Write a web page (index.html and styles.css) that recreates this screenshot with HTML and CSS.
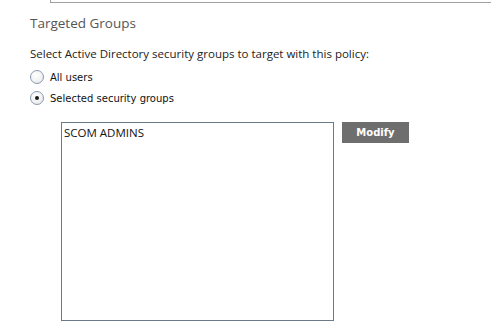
FILE: index.html
```html
<!DOCTYPE html>
<html>
<head>
<meta charset="utf-8">
<link rel="stylesheet" href="styles.css">
</head>
<body>
<div class="topbox"></div>
<div class="section">
  <h2 class="heading">Targeted Groups</h2>
  <p class="intro">Select Active Directory security groups to target with this policy:</p>
  <div class="options">
    <label class="option"><span class="radio"></span><span class="opt-text">All users</span></label>
    <label class="option"><span class="radio checked"></span><span class="opt-text">Selected security groups</span></label>
  </div>
  <div class="groups">
    <div class="listbox">
      <div class="item">SCOM ADMINS</div>
    </div>
    <button class="modify">Modify</button>
  </div>
</div>
</body>
</html>
```
FILE: styles.css
```css
html, body {
  margin: 0;
  padding: 0;
  background: #ffffff;
}
body {
  width: 491px;
  height: 334px;
  overflow: hidden;
  font-family: "Open Sans", "Noto Sans", sans-serif;
  color: #222;
}
.topbox {
  margin-left: 50px;
  height: 2px;
  border-left: 1px solid #a0a0a0;
  border-bottom: 1px solid #a0a0a0;
}
.section {
  padding-left: 30px;
}
.heading {
  margin: 0;
  padding-top: 10px;
  font-size: 13.5px;
  font-weight: 400;
  line-height: 20px;
  color: #555;
}
.intro {
  margin: 0;
  padding-top: 13px;
  font-size: 11.5px;
  line-height: 16px;
  color: #222;
}
.options {
  display: flex;
  flex-direction: column;
  gap: 5px;
  padding-top: 7px;
}
.option {
  display: flex;
  align-items: center;
  gap: 6px;
  height: 16px;
}
.radio {
  width: 12px;
  height: 12px;
  border-radius: 50%;
  border: 1px solid #8a9bb0;
  background: radial-gradient(circle at 40% 35%, #ffffff 0%, #f2f2f2 55%, #d8dde4 100%);
  position: relative;
  flex: none;
}
.radio.checked::after {
  content: "";
  position: absolute;
  left: 4px;
  top: 4px;
  width: 4px;
  height: 4px;
  border-radius: 50%;
  background: #1a1a1a;
}
.opt-text {
  font-family: "DejaVu Sans", Verdana, sans-serif;
  font-size: 10px;
  color: #111;
}
.groups {
  display: flex;
  align-items: flex-start;
  gap: 8px;
  padding-left: 31px;
  padding-top: 16px;
}
.listbox {
  width: 271px;
  height: 197px;
  border: 1px solid #6b7a88;
  background: #fff;
  flex: none;
}
.item {
  padding: 2px 0 0 2px;
  font-size: 11.5px;
  line-height: 16px;
  color: #111;
}
.modify {
  width: 67px;
  height: 21px;
  border: none;
  background: #6e6e6e;
  color: #fff;
  font-family: "DejaVu Sans", Verdana, sans-serif;
  font-weight: bold;
  font-size: 10px;
  padding: 0;
  margin-left: 0;
}
```
